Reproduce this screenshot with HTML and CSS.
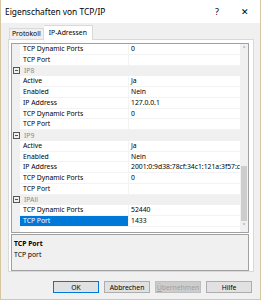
FILE: index.html
```html
<!DOCTYPE html>
<html lang="de">
<head>
    <meta charset="UTF-8">
    <title>Eigenschaften von TCP/IP</title>
    <link rel="stylesheet" href="styles.css">
</head>
<body>
    <div class="window">
        <div class="titlebar">
            <span class="title">Eigenschaften von TCP/IP</span>
            <span class="help">?</span>
            <span class="close">&#x2715;</span>
        </div>
        <div class="dialog">
            <div class="tabs">
                <div class="tab">Protokoll</div>
                <div class="tab active">IP-Adressen</div>
            </div>
            <div class="panel">
                <div class="grid">
                    <div class="rows">
                        <div class="row"><span class="name">TCP Dynamic Ports</span><span class="value">0</span></div>
                        <div class="row"><span class="name">TCP Port</span><span class="value"></span></div>
                        <div class="category"><span class="toggle"></span><span class="cat-name">IP8</span></div>
                        <div class="row"><span class="name">Active</span><span class="value">Ja</span></div>
                        <div class="row"><span class="name">Enabled</span><span class="value">Nein</span></div>
                        <div class="row"><span class="name">IP Address</span><span class="value">127.0.0.1</span></div>
                        <div class="row"><span class="name">TCP Dynamic Ports</span><span class="value">0</span></div>
                        <div class="row"><span class="name">TCP Port</span><span class="value"></span></div>
                        <div class="category"><span class="toggle"></span><span class="cat-name">IP9</span></div>
                        <div class="row"><span class="name">Active</span><span class="value">Ja</span></div>
                        <div class="row"><span class="name">Enabled</span><span class="value">Nein</span></div>
                        <div class="row"><span class="name">IP Address</span><span class="value">2001:0:9d38:78cf:34c1:121a:3f57:c</span></div>
                        <div class="row"><span class="name">TCP Dynamic Ports</span><span class="value">0</span></div>
                        <div class="row"><span class="name">TCP Port</span><span class="value"></span></div>
                        <div class="category"><span class="toggle"></span><span class="cat-name">IPAll</span></div>
                        <div class="row"><span class="name">TCP Dynamic Ports</span><span class="value">52440</span></div>
                        <div class="row selected"><span class="name">TCP Port</span><span class="value">1433</span></div>
                    </div>
                    <div class="scrollbar">
                        <span class="arrow">&#x02C4;</span>
                        <div class="track"><div class="thumb"></div></div>
                        <span class="arrow">&#x02C5;</span>
                    </div>
                </div>
                <div class="desc">
                    <div class="desc-title">TCP Port</div>
                    <div class="desc-text">TCP port</div>
                </div>
            </div>
            <div class="buttons">
                <button class="btn default">OK</button>
                <button class="btn">Abbrechen</button>
                <button class="btn" disabled><u>Ü</u>bernehmen</button>
                <button class="btn">Hilfe</button>
            </div>
        </div>
    </div>
</body>
</html>
```

FILE: styles.css
```css
body {
    margin: 0;
    padding: 0;
    font-family: "Noto Sans", "Open Sans", sans-serif;
    font-size: 6.8px;
    color: #000;
}

.window {
    width: 261px;
    height: 300px;
    box-sizing: border-box;
    border: 1px solid #d6c7a0;
    border-top: none;
    background-color: #f0f0f0;
    display: flex;
    flex-direction: column;
}

.titlebar {
    height: 23px;
    background-color: #fff;
    display: flex;
    align-items: center;
    padding-left: 4px;
}

.title {
    font-size: 8.4px;
    flex: 1;
}

.help {
    font-size: 9px;
    width: 28px;
    text-align: center;
}

.close {
    font-size: 9px;
    width: 28px;
    text-align: center;
    margin-right: 1px;
}

.dialog {
    flex: 1;
    display: flex;
    flex-direction: column;
    padding: 1px 6px 0 7px;
}

.tabs {
    display: flex;
    align-items: flex-end;
    height: 15px;
    padding-left: 1px;
}

.tab {
    height: 10px;
    line-height: 10px;
    padding: 0 2px;
    border: 1px solid #d9d9d9;
    border-bottom: none;
    background-color: #f0f0f0;
}

.tab.active {
    height: 14px;
    line-height: 13px;
    padding: 0 5px;
    background-color: #fff;
    border-left: none;
    margin-bottom: -1px;
    position: relative;
}

.panel {
    background-color: #fff;
    border: 1px solid #d9d9d9;
    height: 233px;
    box-sizing: border-box;
    padding: 3px 4px 0 2px;
    display: flex;
    flex-direction: column;
}

.grid {
    height: 191px;
    box-sizing: border-box;
    border: 1px solid #a0a0a0;
    display: flex;
    background-color: #fff;
}

.rows {
    flex: 1;
    background: linear-gradient(to right, #f0f0f0 8px, #fff 8px);
}

.row, .category {
    height: 10.75px;
    display: flex;
    align-items: center;
    box-sizing: border-box;
}

.row .name {
    width: 109px;
    margin-left: 8px;
    padding-left: 3px;
    box-sizing: border-box;
    height: 100%;
    line-height: 10.75px;
    border-right: 1px solid #f3f3f3;
    border-bottom: 1px solid #f3f3f3;
    white-space: nowrap;
}

.row .value {
    flex: 1;
    padding-left: 2px;
    height: 100%;
    line-height: 10.75px;
    border-bottom: 1px solid #f3f3f3;
    box-sizing: border-box;
    white-space: nowrap;
    overflow: hidden;
}

.row.selected .name {
    background-color: #0078d7;
    color: #fff;
}

.category {
    background-color: #f0f0f0;
}

.toggle {
    width: 5px;
    height: 5px;
    border: 1px solid #555;
    margin-left: 1px;
    margin-right: 4px;
    position: relative;
}

.toggle::after {
    content: "";
    position: absolute;
    left: 1px;
    right: 1px;
    top: 2px;
    height: 1px;
    background-color: #555;
}

.cat-name {
    color: #8a8a8a;
}

.scrollbar {
    width: 10px;
    background-color: #f0f0f0;
    display: flex;
    flex-direction: column;
    align-items: center;
}

.arrow {
    height: 11px;
    line-height: 11px;
    font-size: 8px;
    color: #606060;
}

.track {
    flex: 1;
    width: 100%;
    position: relative;
}

.thumb {
    position: absolute;
    left: 1px;
    right: 1px;
    top: 111px;
    bottom: 0;
    background-color: #cdcdcd;
}

.desc {
    margin-top: 1px;
    height: 37px;
    box-sizing: border-box;
    border: 1px solid #a0a0a0;
    background-color: #f0f0f0;
    padding: 3px 2px;
}

.desc-title {
    font-weight: bold;
    line-height: 11px;
}

.desc-text {
    line-height: 11px;
}

.buttons {
    display: flex;
    justify-content: flex-end;
    gap: 5px;
    padding: 9px 2px 0 0;
}

.btn {
    width: 46px;
    height: 12px;
    padding: 0;
    font-family: "Noto Sans", "Open Sans", sans-serif;
    font-size: 6.8px;
    background-color: #e1e1e1;
    border: 1px solid #adadad;
    color: #000;
}

.btn u {
    text-decoration: underline;
}

.btn.default {
    border-color: #0078d7;
}

.btn:disabled {
    background-color: #cccccc;
    border-color: #bfbfbf;
    color: #a0a0a0;
}
```
